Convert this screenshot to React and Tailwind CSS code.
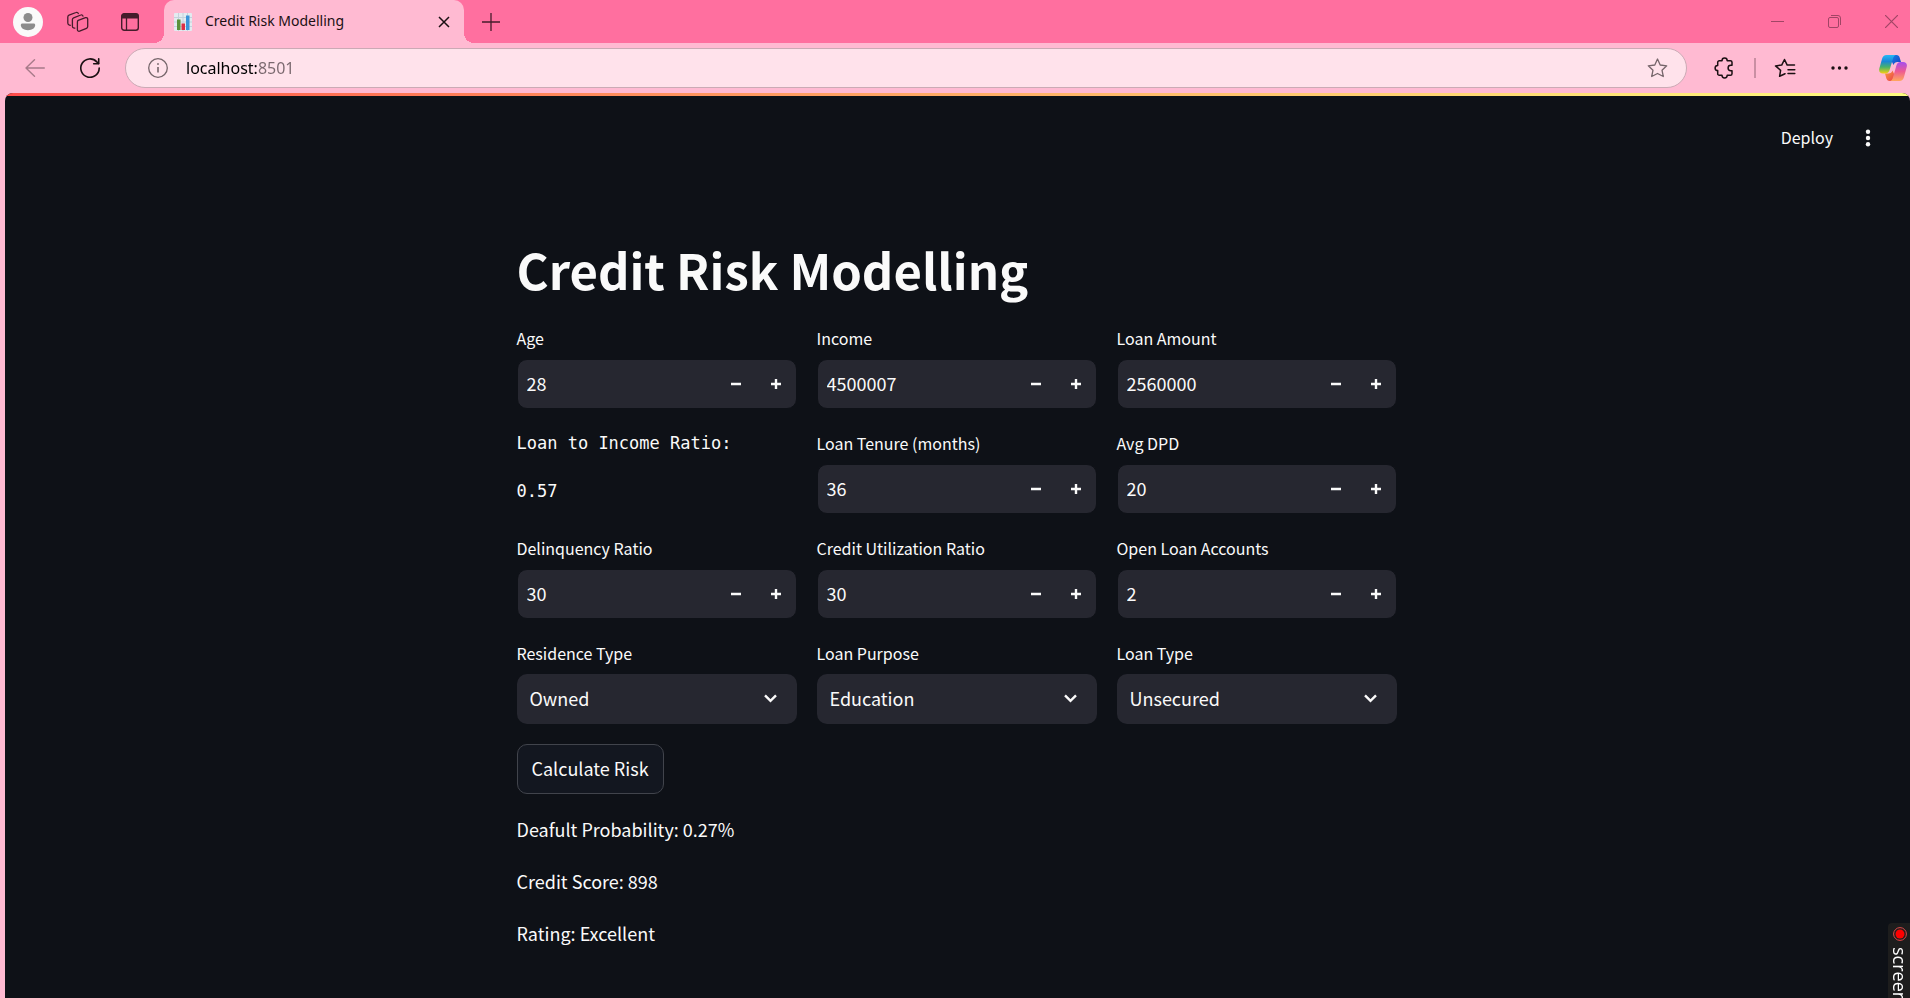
import { useId, useState } from "react";

const sans = "font-['Noto_Sans_CJK_SC','Open_Sans',sans-serif]";
const mono = "font-['DejaVu_Sans_Mono','Liberation_Mono',monospace]";
const chrome = "font-['Noto_Sans','Open_Sans',sans-serif]";

function ProfileIcon() {
  return (
    <svg width="30" height="30" viewBox="0 0 30 30" aria-hidden="true">
      <circle cx="15" cy="15" r="15" fill="#fafafa" />
      <circle cx="15" cy="10.5" r="4.5" fill="#8c8c8c" />
      <path d="M9.4 16.5h11.2c.9 0 1.6.7 1.6 1.6 0 3-3 5.2-7.2 5.2s-7.2-2.2-7.2-5.2c0-.9.7-1.6 1.6-1.6Z" fill="#8c8c8c" />
    </svg>
  );
}

function WorkspacesIcon() {
  return (
    <svg width="22" height="22" viewBox="0 0 22 22" fill="none" stroke="#451c2b" strokeWidth="1.3" strokeLinejoin="round" strokeLinecap="round" aria-hidden="true">
      <path d="m11.200 9.300 7.300-2.600c1.100-.4 2.200.3 2.200 1.400v7.400c0 .8-.5 1.500-1.200 1.800l-6.900 2.900c-1.100.4-2.200-.3-2.200-1.400V11c0-.8.2-1.400.8-1.700Z" />
      <path d="M7.800 17.200 6.600 16.900c-.8-.3-1.200-.9-1.200-1.700V8.600c0-.8.5-1.500 1.200-1.800l7.200-2.800c.9-.4 1.900 0 2.200 1.200" />
      <path d="M3.300 14.300 2 13.800c-.7-.3-1.200-.9-1.200-1.700V6c0-.8.5-1.500 1.200-1.800l7-2.700c.9-.4 1.900 0 2.300 1" />
    </svg>
  );
}

function VerticalTabsIcon() {
  return (
    <svg width="18" height="18" viewBox="0 0 18 18" fill="none" aria-hidden="true">
      <rect x=".7" y=".7" width="16.600" height="16.600" rx="2.500" stroke="#451c2b" strokeWidth="1.400" />
      <path d="M.5 5.500V3A2.500 2.500 0 0 1 3 .5h12A2.500 2.500 0 0 1 17.500 3v2.500Z" fill="#451c2b" />
      <path d="M5.500 5v12" stroke="#451c2b" strokeWidth="1.300" />
    </svg>
  );
}

function ChartIcon() {
  return (
    <svg width="18" height="18" viewBox="0 0 18 18" aria-hidden="true">
      <rect width="18" height="18" rx="1" fill="#e3ebf0" />
      <path d="M0 4.500h18M0 9h18M0 13.500h18M4.500 0v18M9 0v18M13.500 0v18" stroke="#c3d2dc" strokeWidth="1" />
      <rect x="3" y="6.500" width="3.500" height="10.500" fill="#5c913b" />
      <rect x="7.500" y="10.500" width="3.500" height="6.500" fill="#dd2e44" />
      <rect x="12" y="2.500" width="3.500" height="14.500" fill="#3b94d9" />
    </svg>
  );
}

function PuzzleIcon() {
  return (
    <svg width="20" height="22" viewBox="0 0 20 22" fill="none" stroke="#1b1013" strokeWidth="1.500" strokeLinejoin="round" aria-hidden="true">
      <path d="M8 3.700a2.600 2.600 0 0 1 5.200 0h3.200a1.600 1.600 0 0 1 1.600 1.600v3h-1.200a2.700 2.700 0 0 0 0 5.400H18v3a1.600 1.600 0 0 1-1.600 1.600h-3.200a2.600 2.600 0 0 1-5.200 0H5.300a1.600 1.600 0 0 1-1.600-1.600v-3.100a2.600 2.600 0 0 1 0-5.200V5.300a1.600 1.600 0 0 1 1.600-1.600Z" />
    </svg>
  );
}

function StarIcon() {
  return (
    <svg width="21" height="20" viewBox="0 0 21 20" fill="none" stroke="#75656a" strokeWidth="1.300" strokeLinejoin="round" aria-hidden="true">
      <path d="M10.500 1 13.200 7l6.500.8-4.700 4.400 1.300 6.300-5.800-3-5.800 3L6 12.200 1.300 7.800l6.500-.8Z" />
    </svg>
  );
}

function FavoritesIcon() {
  return (
    <svg width="22" height="20" viewBox="0 0 22 20" fill="none" stroke="#1b1013" strokeWidth="1.500" strokeLinejoin="round" strokeLinecap="round" aria-hidden="true">
      <path d="M11 15.700 5.600 18.300l1-5.900L1.500 7.900l6.200-.8L10.500 1.500l2.700 5.600h7.300" />
      <path d="M14 11.700h6.800M14 15.600h6.800" />
    </svg>
  );
}

function CopilotIcon() {
  return (
    <svg width="28" height="26" viewBox="0 0 28 26" aria-hidden="true">
      <defs>
        <linearGradient id="cp-left" x1="0" y1="0" x2="0" y2="1">
          <stop offset="0" stopColor="#26b8f4" />
          <stop offset=".35" stopColor="#1a86d8" />
          <stop offset=".65" stopColor="#48b26b" />
          <stop offset="1" stopColor="#f5cf10" />
        </linearGradient>
        <linearGradient id="cp-right" x1="0" y1="0" x2="0" y2="1">
          <stop offset="0" stopColor="#a44df0" />
          <stop offset=".5" stopColor="#ee5a93" />
          <stop offset="1" stopColor="#ffa85c" />
        </linearGradient>
        <linearGradient id="cp-top" x1="0" y1="0" x2="1" y2="1">
          <stop offset="0" stopColor="#1583e8" />
          <stop offset="1" stopColor="#1a3fc0" />
        </linearGradient>
        <linearGradient id="cp-bottom" x1="0" y1="0" x2="1" y2="1">
          <stop offset="0" stopColor="#f9a13b" />
          <stop offset="1" stopColor="#ea3a4d" />
        </linearGradient>
      </defs>
      <path d="M13 0h4.500c1.700 0 2.700 1.100 3.200 2.700L22 7h-3.500c-2 0-3.400 1-4 3L12 5Z" fill="url(#cp-top)" />
      <path d="M15 26h-4.500c-1.700 0-2.700-1.100-3.200-2.700L6 18.500h3.500c2 0 3.400-1 4-3L16 21Z" fill="url(#cp-bottom)" />
      <path d="M7.500 0h9.300c-1.600.4-2.300 2-2.900 4l-3.300 11c-.7 2.200-1.900 3.500-4.100 3.500H4c-3 0-4.500-2-3.700-5L3 4C3.700 1.500 5.200 0 7.500 0Z" fill="url(#cp-left)" />
      <path d="M20.500 26h-9.300c1.600-.4 2.300-2 2.900-4l3.300-11.500C18.100 8.300 19.300 7 21.500 7H24c3 0 4.500 2 3.700 5L25 22c-.7 2.500-2.200 4-4.500 4Z" fill="url(#cp-right)" />
    </svg>
  );
}

function TitleBar() {
  return (
    <header className="flex h-[43px] items-stretch bg-[#ff6f9f]">
      <div className="flex w-[164px] shrink-0 items-center pl-[13px]">
        <button aria-label="Profile" className="mr-6"><ProfileIcon /></button>
        <button aria-label="Workspaces" className="mr-8"><WorkspacesIcon /></button>
        <button aria-label="Tab actions"><VerticalTabsIcon /></button>
      </div>
      <div className="relative flex w-[300px] shrink-0 items-center rounded-t-[10px] bg-[#ffbad2] pr-[14px] pl-[10px]">
        <span className="absolute bottom-0 -left-[10px] size-[10px] bg-[radial-gradient(circle_at_0_0,#ff6f9f_10px,#ffbad2_10px)]" />
        <span className="absolute -right-[10px] bottom-0 size-[10px] bg-[radial-gradient(circle_at_100%_0,#ff6f9f_10px,#ffbad2_10px)]" />
        <ChartIcon />
        <span className="ml-[13px] flex-1 pb-[2px] text-sm whitespace-nowrap text-[#1b1013]">Credit Risk Modelling</span>
        <button aria-label="Close tab">
          <svg width="12" height="12" viewBox="0 0 12 12" stroke="#1b1013" strokeWidth="1.500" aria-hidden="true"><path d="m1 1 10 10M11 1 1 11" /></svg>
        </button>
      </div>
      <button aria-label="New tab" className="ml-[18px]">
        <svg width="18" height="18" viewBox="0 0 18 18" stroke="#451c2b" strokeWidth="1.300" aria-hidden="true"><path d="M9 0v18M0 9h18" /></svg>
      </button>
      <div className="ml-auto flex items-center gap-11 pr-3">
        <button aria-label="Minimize">
          <svg width="13" height="13" viewBox="0 0 13 13" stroke="#a14565" aria-hidden="true"><path d="M0 6.500h13" /></svg>
        </button>
        <button aria-label="Restore">
          <svg width="13" height="13" viewBox="0 0 13 13" fill="none" stroke="#a14565" aria-hidden="true">
            <rect x=".5" y="2.500" width="10" height="10" rx="1.500" />
            <path d="M3 .5h7A2.500 2.500 0 0 1 12.500 3v7" />
          </svg>
        </button>
        <button aria-label="Close window">
          <svg width="13" height="13" viewBox="0 0 13 13" stroke="#a14565" strokeWidth="1.200" aria-hidden="true"><path d="m0 0 13 13M13 0 0 13" /></svg>
        </button>
      </div>
    </header>
  );
}

function AddressBar() {
  const [address, setAddress] = useState("localhost:8501");
  return (
    <nav className="flex h-[50px] items-center bg-[#ffbad2] pr-[3px] pl-[25px]">
      <button aria-label="Back" className="mr-[35px]">
        <svg width="20" height="18" viewBox="0 0 20 18" fill="none" stroke="#a77a89" strokeWidth="1.400" strokeLinecap="round" strokeLinejoin="round" aria-hidden="true"><path d="M19.300 9H1M9.500.800 1 9l8.500 8.200" /></svg>
      </button>
      <button aria-label="Refresh" className="mr-[25px]">
        <svg width="20" height="20" viewBox="0 0 20 20" fill="none" stroke="#1b1013" strokeWidth="1.600" strokeLinecap="round" strokeLinejoin="round" aria-hidden="true">
          <path d="M19.200 10A9.200 9.200 0 1 1 16.800 3.900L18.500 5.500" />
          <path d="M18.700.8v5h-5" />
        </svg>
      </button>
      <div className="flex h-10 flex-1 items-center rounded-full border border-[#cbaab5] bg-[#ffe2eb] pr-[18px] pl-[22px]">
        <svg width="20" height="20" viewBox="0 0 20 20" fill="none" stroke="#75656a" strokeWidth="1.300" aria-hidden="true">
          <circle cx="10" cy="10" r="9.300" />
          <path d="M10 9v5.500" strokeWidth="1.600" />
          <circle cx="10" cy="6" r=".6" fill="#75656a" strokeWidth=".8" />
        </svg>
        <input
          aria-label="Address"
          value={address}
          onChange={(e) => setAddress(e.target.value)}
          className="ml-[18px] min-w-0 flex-1 bg-[linear-gradient(90deg,#000_71px,#7a686e_71px)] bg-clip-text text-base text-transparent caret-black outline-none"
        />
        <button aria-label="Add to favorites"><StarIcon /></button>
      </div>
      <button aria-label="Extensions" className="ml-[27px]"><PuzzleIcon /></button>
      <span className="ml-5 h-5 w-[2px] bg-[#c98fa3]" />
      <button aria-label="Favorites" className="ml-[18px]"><FavoritesIcon /></button>
      <button aria-label="Settings and more" className="ml-[35px]">
        <svg width="17" height="4" viewBox="0 0 17 4" fill="#1b1013" aria-hidden="true"><circle cx="2" cy="2" r="1.700" /><circle cx="8.500" cy="2" r="1.700" /><circle cx="15" cy="2" r="1.700" /></svg>
      </button>
      <button aria-label="Copilot" className="ml-[31px]"><CopilotIcon /></button>
    </nav>
  );
}

function NumberField({ label, initial }) {
  const id = useId();
  const [value, setValue] = useState(initial);
  const step = (delta) => setValue((v) => Number(v) + delta);
  return (
    <div>
      <label htmlFor={id} className="block h-[35px] text-base leading-7">{label}</label>
      <div className="flex h-[50px] overflow-hidden rounded-[10px] border border-[#0e1117] bg-[#262730]">
        <input
          id={id}
          type="number"
          value={value}
          onChange={(e) => setValue(e.target.value)}
          className="min-w-0 flex-1 [appearance:textfield] bg-transparent pb-[2px] pl-[9px] text-lg outline-none [&::-webkit-inner-spin-button]:appearance-none"
        />
        <button aria-label={`Decrease ${label}`} onClick={() => step(-1)} className="flex w-10 items-center justify-center">
          <svg width="10" height="10" viewBox="0 0 10 10" stroke="currentColor" strokeWidth="2.400" aria-hidden="true"><path d="M0 5h10" /></svg>
        </button>
        <button aria-label={`Increase ${label}`} onClick={() => step(1)} className="flex w-10 items-center justify-center">
          <svg width="10" height="10" viewBox="0 0 10 10" stroke="currentColor" strokeWidth="2.400" aria-hidden="true"><path d="M0 5h10M5 0v10" /></svg>
        </button>
      </div>
    </div>
  );
}

function SelectField({ label, options }) {
  const id = useId();
  return (
    <div>
      <label htmlFor={id} className="block h-[35px] text-base leading-7">{label}</label>
      <div className="relative">
        <select id={id} className="block h-[50px] w-full appearance-none rounded-[10px] bg-[#262730] pr-10 pb-[2px] pl-[13px] text-lg outline-none">
          {options.map((o) => <option key={o}>{o}</option>)}
        </select>
        <svg className="pointer-events-none absolute top-[20px] right-5 h-[9px] w-[13px]" viewBox="0 0 13 9" fill="none" stroke="currentColor" strokeWidth="2.400" aria-hidden="true"><path d="m1 1.300 5.500 5.500L12 1.300" /></svg>
      </div>
    </div>
  );
}

function RecorderBadge() {
  return (
    <div className="fixed right-0 bottom-0 flex h-[75px] w-[22px] flex-col items-center overflow-hidden rounded-tl-[4px] bg-[#1d1d1d] pt-1 pl-[2px] text-white">
      <svg className="shrink-0" width="14" height="14" viewBox="0 0 14 14" aria-hidden="true">
        <circle cx="7" cy="7" r="6.400" fill="none" stroke="#e04848" strokeWidth="1" />
        <circle cx="7" cy="7" r="4.500" fill="#ff0000" />
      </svg>
      <span className="mt-[6px] font-['Open_Sans',sans-serif] text-lg leading-4 whitespace-nowrap [writing-mode:vertical-rl]">screen</span>
    </div>
  );
}

export default function App() {
  return (
    <div className="flex min-h-screen flex-col bg-[#ffbad2]">
      <div className={chrome}>
        <TitleBar />
        <AddressBar />
      </div>
      <div className={`${sans} ml-[5px] flex-1 overflow-hidden rounded-t-lg bg-[#0e1117] text-[#fafafa]`}>
        <div className="h-[3px] bg-linear-to-r from-[#ff4b4b] to-[#fffd80]" />
        <div className="flex h-[84px] items-center justify-end pr-[39px]">
          <button className="pb-[2px] text-base leading-6">Deploy</button>
          <button aria-label="Main menu" className="ml-8">
            <svg width="6" height="18" viewBox="0 0 6 18" fill="currentColor" aria-hidden="true"><circle cx="3" cy="2.700" r="2.200" /><circle cx="3" cy="9" r="2.200" /><circle cx="3" cy="15.300" r="2.200" /></svg>
          </button>
        </div>
        <div className="pt-14 pr-[2px]">
          <main className="mx-auto flex max-w-[880px] flex-col gap-5">
            <h1 className="pb-[2px] text-[49px] leading-[66px] font-bold">Credit Risk Modelling</h1>
            <div className="grid grid-cols-3 gap-5">
              <NumberField label="Age" initial={28} />
              <NumberField label="Income" initial={4500007} />
              <NumberField label="Loan Amount" initial={2560000} />
              <div className={`${mono} flex flex-col gap-5 text-[17px] leading-7`}>
                <p>Loan to Income Ratio:</p>
                <p>0.57</p>
              </div>
              <NumberField label="Loan Tenure (months)" initial={36} />
              <NumberField label="Avg DPD" initial={20} />
              <NumberField label="Delinquency Ratio" initial={30} />
              <NumberField label="Credit Utilization Ratio" initial={30} />
              <NumberField label="Open Loan Accounts" initial={2} />
              <SelectField label="Residence Type" options={["Owned", "Rented", "Mortgage"]} />
              <SelectField label="Loan Purpose" options={["Education", "Home", "Auto", "Personal"]} />
              <SelectField label="Loan Type" options={["Unsecured", "Secured"]} />
            </div>
            <button className="h-[50px] self-start rounded-[10px] border border-[#41444c] bg-[#131720] px-[14px] pb-[2px] text-lg">Calculate Risk</button>
            <p className="h-8 text-lg leading-[30px]">Deafult Probability: 0.27%</p>
            <p className="h-8 text-lg leading-[30px]">Credit Score: 898</p>
            <p className="h-8 text-lg leading-[30px]">Rating: Excellent</p>
          </main>
        </div>
      </div>
      <RecorderBadge />
    </div>
  );
}
